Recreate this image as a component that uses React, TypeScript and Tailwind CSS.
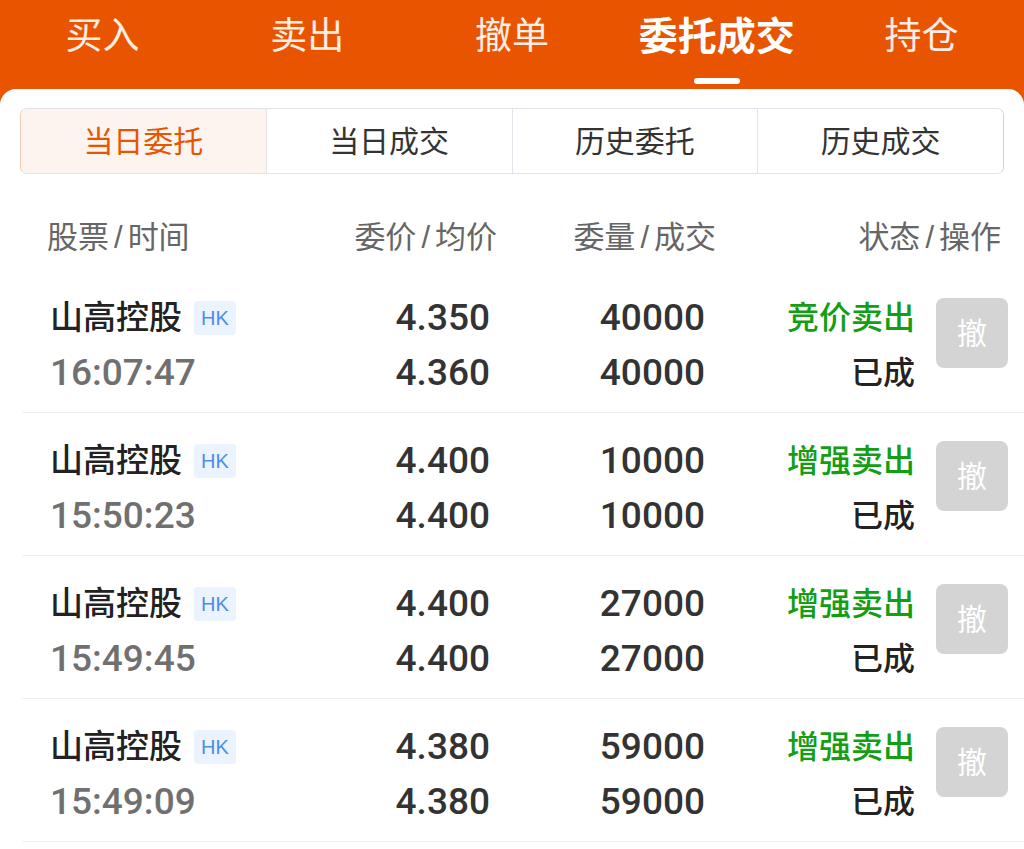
import { useState } from 'react'

type Order = {
  time: string
  price: string
  avg: string
  qty: string
  filled: string
  side: string
  status: string
}

const tabs = ['买入', '卖出', '撤单', '委托成交', '持仓']
const segments = ['当日委托', '当日成交', '历史委托', '历史成交']

const orders: Order[] = [
  { time: '16:07:47', price: '4.350', avg: '4.360', qty: '40000', filled: '40000', side: '竞价卖出', status: '已成' },
  { time: '15:50:23', price: '4.400', avg: '4.400', qty: '10000', filled: '10000', side: '增强卖出', status: '已成' },
  { time: '15:49:45', price: '4.400', avg: '4.400', qty: '27000', filled: '27000', side: '增强卖出', status: '已成' },
  { time: '15:49:09', price: '4.380', avg: '4.380', qty: '59000', filled: '59000', side: '增强卖出', status: '已成' },
]

const font = "font-['Liberation_Sans','Noto_Sans_CJK_SC',sans-serif]"
const num = "font-['Roboto',sans-serif] font-medium text-[37px] leading-[44px]"

function Head({ a, b }: { a: string; b: string }) {
  return (
    <>
      {a}
      <span className="mx-[5px]">/</span>
      {b}
    </>
  )
}

export default function App() {
  const [tab, setTab] = useState(3)
  const [seg, setSeg] = useState(0)

  return (
    <div className={`min-h-[849px] w-[1024px] bg-white ${font}`}>
      <div className="bg-[#E85400]">
        <div className="flex h-[89px]">
          {tabs.map((t, i) => (
            <button
              key={t}
              type="button"
              onClick={() => setTab(i)}
              className="flex flex-1 flex-col items-center"
            >
              <span
                className={`flex h-[74px] items-center ${
                  tab === i ? 'text-[39px] font-bold text-white' : 'text-[37px] text-white/90'
                }`}
              >
                {t}
              </span>
              {tab === i ? (
                <span className="mt-[4px] h-[6px] w-[46px] rounded-full bg-white" />
              ) : null}
            </button>
          ))}
        </div>

        <div className="rounded-t-[16px] bg-white pt-[19px]">
          <div className="mx-[20px] flex h-[66px] overflow-hidden rounded-[7px] border border-[#E2E2EA] border-l-[#F2C9B4] border-r-[#F2C9B4]">
            {segments.map((s, i) => (
              <button
                key={s}
                type="button"
                onClick={() => setSeg(i)}
                className={`flex flex-1 items-center justify-center text-[30px] ${
                  i > 0 ? 'border-l border-[#E2E2EA]' : ''
                } ${seg === i ? 'bg-[#FDF4F0] text-[#E85400]' : 'bg-white text-[#333]'}`}
              >
                {s}
              </button>
            ))}
          </div>

          <div className="flex pl-[47px] pr-[23px] pt-[42px] pb-[10px] text-[31px] leading-[44px] text-[#666]">
            <div className="w-[250px]"><Head a="股票" b="时间" /></div>
            <div className="w-[200px] text-right"><Head a="委价" b="均价" /></div>
            <div className="w-[219px] text-right"><Head a="委量" b="成交" /></div>
            <div className="flex-1 text-right"><Head a="状态" b="操作" /></div>
          </div>

          <div>
            {orders.map((o) => (
              <div key={o.time} className="ml-[22px] flex border-b border-[#EFEFEF] pt-[26px] pb-[17px] pl-[28px] pr-[14px]">
                <div className="w-[240px]">
                  <div className="flex h-[44px] items-center gap-[12px]">
                    <span className="text-[33px] font-medium text-[#222]">山高控股</span>
                    <span className="flex h-[34px] w-[42px] items-center justify-center rounded-[4px] bg-[#EAF3FE] text-[20px] text-[#4A8FE8]">
                      HK
                    </span>
                  </div>
                  <div className={`mt-[11px] h-[44px] text-[#707070] ${num}`}>{o.time}</div>
                </div>
                <div className={`w-[200px] text-right text-[#333] ${num}`}>
                  <div>{o.price}</div>
                  <div className="mt-[11px]">{o.avg}</div>
                </div>
                <div className={`w-[215px] text-right text-[#333] ${num}`}>
                  <div>{o.qty}</div>
                  <div className="mt-[11px]">{o.filled}</div>
                </div>
                <div className="w-[210px] text-right text-[32px] font-medium leading-[44px]">
                  <div className="text-[#139E13]">{o.side}</div>
                  <div className="mt-[11px] text-[#222]">{o.status}</div>
                </div>
                <button
                  type="button"
                  className="ml-[21px] mt-[2px] flex h-[70px] w-[72px] items-center justify-center rounded-[8px] bg-[#D4D4D4] text-[30px] text-white"
                >
                  撤
                </button>
              </div>
            ))}
          </div>
        </div>
      </div>
    </div>
  )
}
